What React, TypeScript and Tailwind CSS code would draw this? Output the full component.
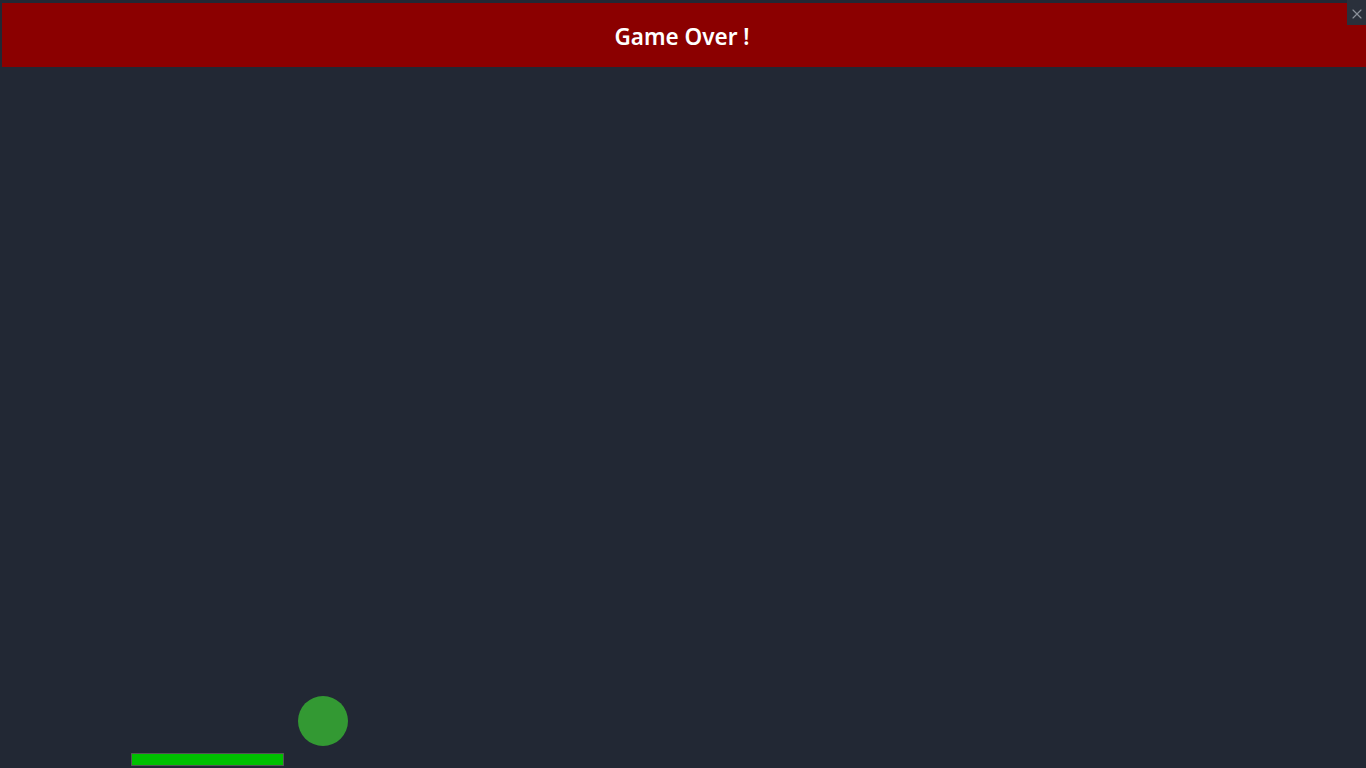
import { X } from 'lucide-react';

export default function App() {
  return (
    <div className="relative w-[1366px] h-[768px] overflow-hidden bg-[#222834] font-['Noto_Sans',sans-serif]">
      {/* Banner */}
      <div className="ml-[2px] mt-[3px] h-[64px] bg-[#8b0000] flex items-center justify-center pt-[5px] pr-[4px]">
        <span className="text-white text-[22.5px] font-semibold leading-none">Game Over !</span>
      </div>

      {/* Close */}
      <button className="absolute top-0 right-0 w-[19px] h-[25px] pt-[3px] pl-[1px] bg-[#2a303b] flex items-center justify-center text-[#8a9099]">
        <X size={16} strokeWidth={1.75} />
      </button>

      {/* Ball */}
      <div className="absolute left-[298px] top-[696px] w-[50px] h-[50px] rounded-full bg-[#339933]" />

      {/* Paddle */}
      <div className="absolute left-[131px] top-[753px] w-[153px] h-[13px] bg-[#00c000] border border-[#555]" />
    </div>
  );
}
